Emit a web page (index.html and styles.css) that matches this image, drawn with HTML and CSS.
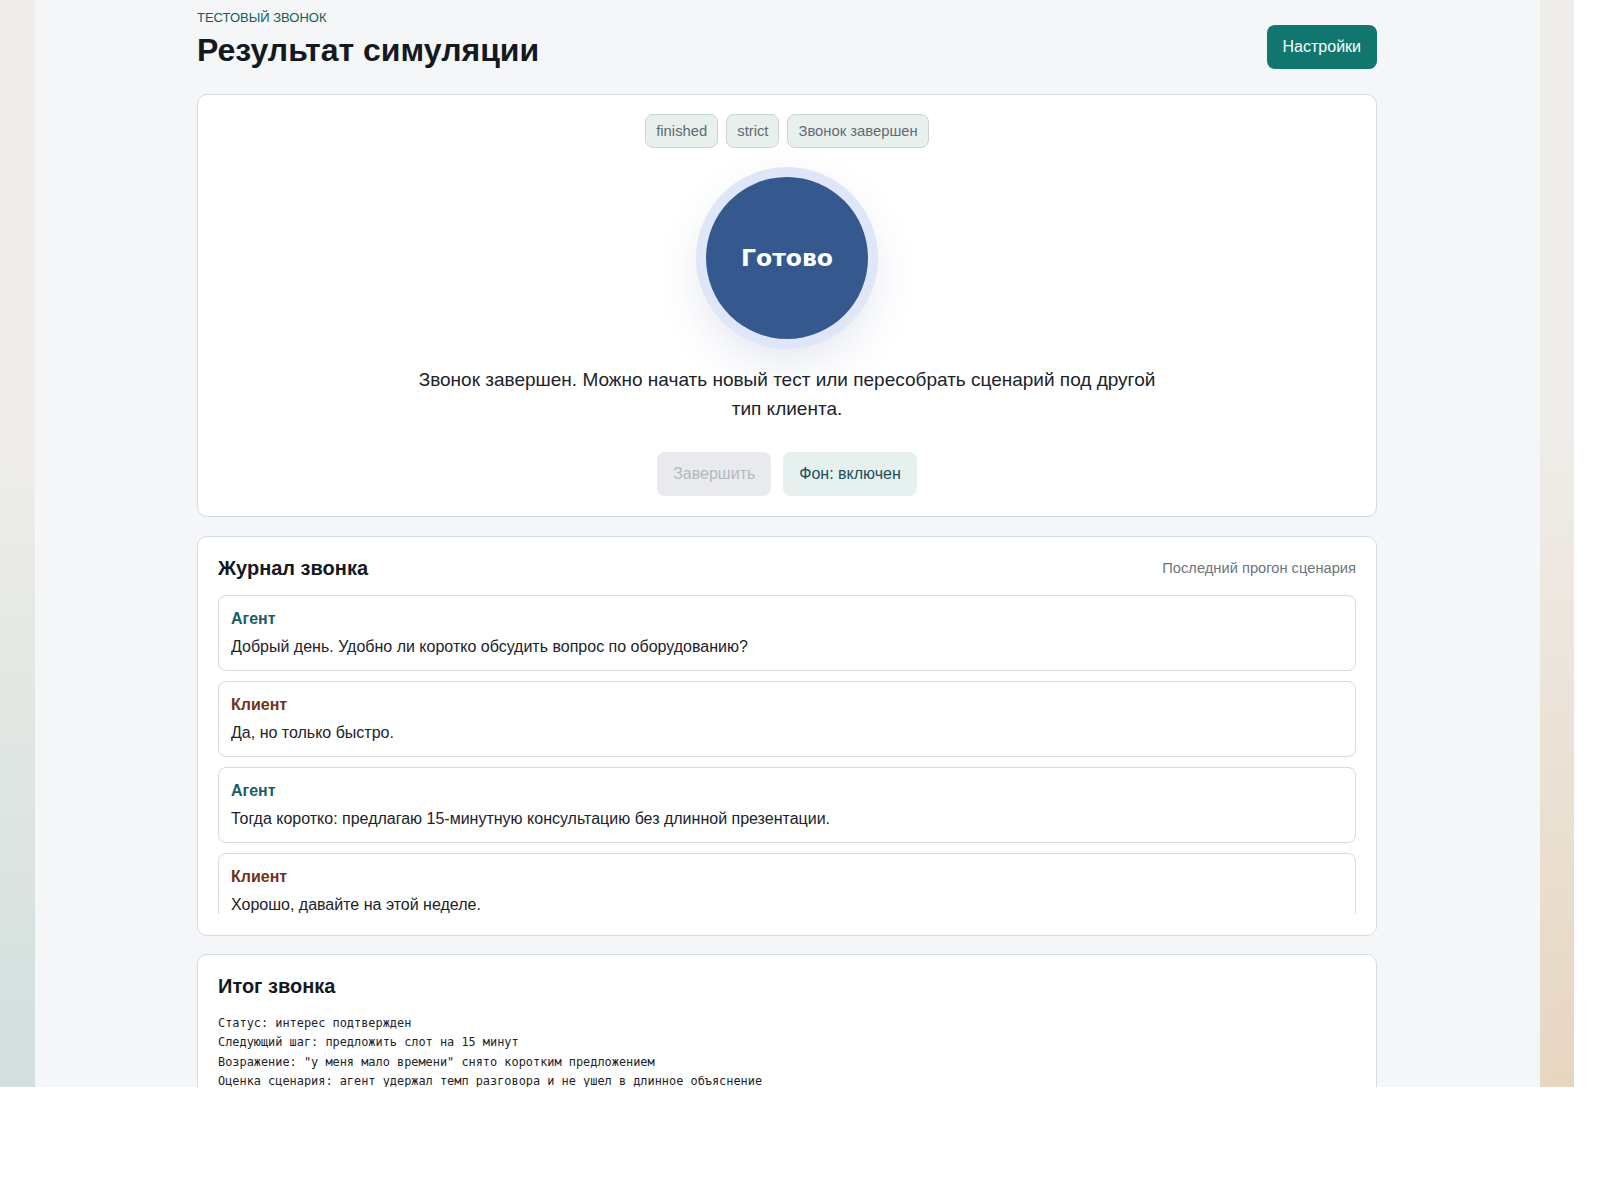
FILE: index.html
```html
<!DOCTYPE html>
<html lang="ru">

<head>
    <meta charset="UTF-8">
    <meta name="viewport" content="width=device-width, initial-scale=1.0">
    <title>Результат симуляции</title>
    <link rel="stylesheet" href="styles.css">
</head>

<body>
    <div class="stage">
        <div class="shell">
            <main class="page">
                <header class="page-head">
                    <div>
                        <div class="eyebrow">Тестовый звонок</div>
                        <h1>Результат симуляции</h1>
                    </div>
                    <button class="btn-primary">Настройки</button>
                </header>

                <section class="card call-card">
                    <div class="chips">
                        <span class="chip">finished</span>
                        <span class="chip">strict</span>
                        <span class="chip">Звонок завершен</span>
                    </div>
                    <div class="orb">Готово</div>
                    <p class="call-note">Звонок завершен. Можно начать новый тест или пересобрать сценарий под другой тип клиента.</p>
                    <div class="actions">
                        <button class="btn-soft" disabled>Завершить</button>
                        <button class="btn-soft btn-toggle">Фон: включен</button>
                    </div>
                </section>

                <section class="card log-card">
                    <div class="card-head">
                        <h2>Журнал звонка</h2>
                        <span class="card-hint">Последний прогон сценария</span>
                    </div>
                    <div class="log">
                        <div class="msg">
                            <div class="msg-who agent">Агент</div>
                            <div class="msg-text">Добрый день. Удобно ли коротко обсудить вопрос по оборудованию?</div>
                        </div>
                        <div class="msg">
                            <div class="msg-who client">Клиент</div>
                            <div class="msg-text">Да, но только быстро.</div>
                        </div>
                        <div class="msg">
                            <div class="msg-who agent">Агент</div>
                            <div class="msg-text">Тогда коротко: предлагаю 15-минутную консультацию без длинной презентации.</div>
                        </div>
                        <div class="msg">
                            <div class="msg-who client">Клиент</div>
                            <div class="msg-text">Хорошо, давайте на этой неделе.</div>
                        </div>
                    </div>
                </section>

                <section class="card">
                    <div class="card-head">
                        <h2>Итог звонка</h2>
                    </div>
                    <pre class="summary">Статус: интерес подтвержден
Следующий шаг: предложить слот на 15 минут
Возражение: "у меня мало времени" снято коротким предложением
Оценка сценария: агент удержал темп разговора и не ушел в длинное объяснение</pre>
                </section>
            </main>
        </div>
    </div>
</body>

</html>
```

FILE: styles.css
```css
body {
    margin: 0;
    padding: 0;
    background: #fff;
    font-family: "Liberation Sans", Arial, sans-serif;
    color: #1b232c;
}

/* фон страницы */
.stage {
    width: 1574px;
    height: 1087px;
    overflow: hidden;
    background:
        radial-gradient(ellipse 70% 60% at 0% 100%, #d1dfdd 0%, rgba(209, 223, 221, 0) 100%),
        radial-gradient(ellipse 70% 60% at 100% 100%, #e6d6c1 0%, rgba(230, 214, 193, 0) 100%),
        #efede9;
}

.shell {
    width: 1505px;
    height: 100%;
    margin: 0 auto;
    background-color: #f4f6f8;
}

.page {
    width: 1180px;
    margin: 0 auto;
    padding-top: 10px;
}

.page-head {
    display: flex;
    justify-content: space-between;
    align-items: flex-start;
    margin-bottom: 24px;
}

.eyebrow {
    font-size: 13px;
    line-height: 16px;
    text-transform: uppercase;
    color: #0f5f5c;
}

h1 {
    margin: 4px 0 0;
    font-size: 32px;
    line-height: 40px;
    font-weight: 700;
    color: #14191f;
}

.btn-primary {
    margin-top: 15px;
    height: 44px;
    padding: 0 16px;
    border: none;
    border-radius: 8px;
    background-color: #11766d;
    color: #fff;
    font-family: inherit;
    font-size: 16px;
    cursor: pointer;
}

.card {
    background-color: #fff;
    border: 1px solid #d3dbe3;
    border-radius: 10px;
    padding: 19px 20px;
    margin-bottom: 19px;
}

.call-card {
    display: flex;
    flex-direction: column;
    align-items: center;
    padding-bottom: 20px;
}

.chips {
    display: flex;
    gap: 8px;
}

.chip {
    padding: 6px 10px;
    font-size: 14.8px;
    line-height: 20px;
    color: #5f6a74;
    background-color: #e8f0ee;
    border: 1px solid #c9d5d3;
    border-radius: 8px;
}

.orb {
    width: 162px;
    height: 162px;
    margin-top: 29px;
    border-radius: 50%;
    background-color: #35598f;
    box-shadow: 0 0 0 10px #dfe6f7, 0 18px 50px rgba(40, 70, 130, 0.16);
    display: flex;
    align-items: center;
    justify-content: center;
    color: #fff;
    font-family: "DejaVu Sans", Verdana, sans-serif;
    font-weight: 700;
    font-size: 23.5px;
}

.call-note {
    max-width: 760px;
    margin: 26px 0 0;
    text-align: center;
    font-size: 19px;
    line-height: 29px;
    color: #1b232c;
}

.actions {
    display: flex;
    gap: 12px;
    margin-top: 29px;
}

.btn-soft {
    height: 44px;
    padding: 0 16px;
    border: none;
    border-radius: 8px;
    background-color: #e6f0ee;
    color: #1b4f58;
    font-family: inherit;
    font-size: 16px;
    cursor: pointer;
}

.btn-soft:disabled {
    background-color: #e8eaee;
    color: #b4b8be;
    cursor: not-allowed;
}

.log-card {
    padding-bottom: 21px;
    margin-bottom: 18px;
}

.card-head {
    display: flex;
    justify-content: space-between;
    align-items: center;
}

.card-head h2 {
    margin: 0;
    font-size: 20px;
    line-height: 24px;
    font-weight: 700;
    color: #14191f;
}

.card-hint {
    font-size: 14.7px;
    color: #6b7580;
}

.log {
    display: flex;
    flex-direction: column;
    gap: 10px;
    margin-top: 15px;
    height: 319px;
    overflow: hidden;
}

.msg {
    flex-shrink: 0;
    border: 1px solid #d3dbe3;
    border-radius: 8px;
    padding: 13px 12px 12px;
}

.msg-who {
    font-size: 16px;
    line-height: 20px;
    font-weight: 700;
}

.msg-who.agent {
    color: #1b5c63;
}

.msg-who.client {
    color: #74301a;
}

.msg-text {
    margin-top: 7px;
    font-size: 16px;
    line-height: 22px;
    color: #1b232c;
}

.summary {
    margin: 16px 0 0;
    font-family: "DejaVu Sans Mono", "Liberation Mono", monospace;
    font-size: 11.9px;
    line-height: 19.3px;
    color: #1b232c;
    white-space: pre-wrap;
}
```
